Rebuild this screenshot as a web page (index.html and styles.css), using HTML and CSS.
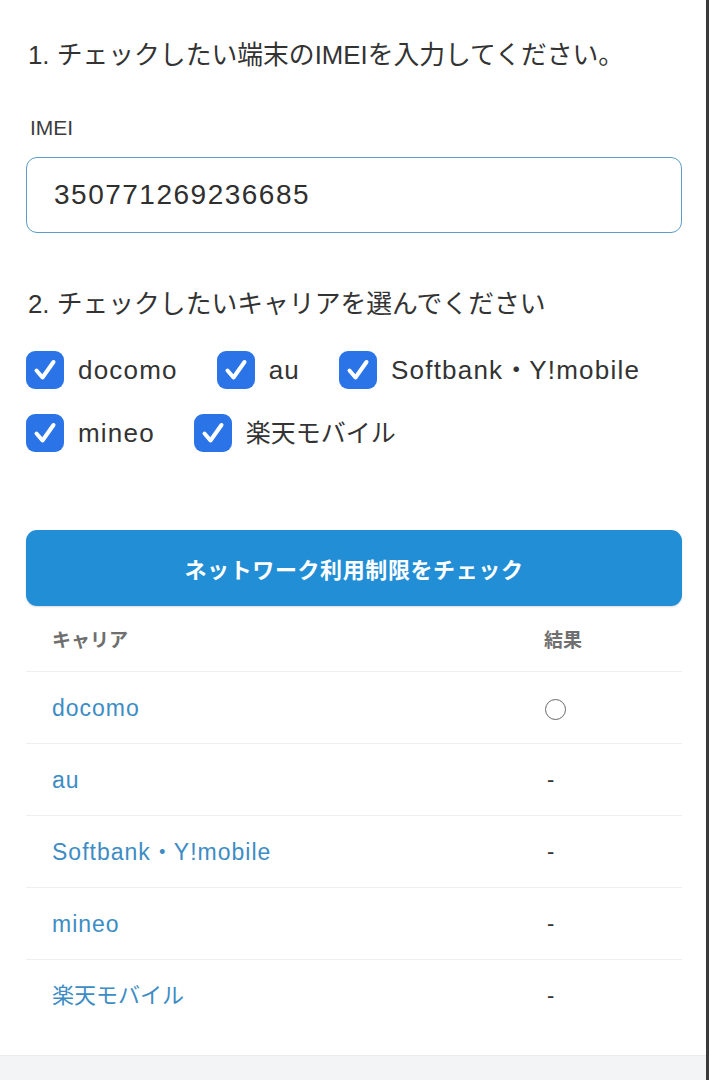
FILE: index.html
```html
<!DOCTYPE html>
<html lang="ja">
<head>
<meta charset="utf-8">
<link rel="stylesheet" href="styles.css">
</head>
<body>
<div class="page">
  <main class="content">
    <h2 class="step">1. チェックしたい端末のIMEIを入力してください。</h2>
    <label class="field-label">IMEI</label>
    <div class="input">350771269236685</div>

    <h2 class="step step-2">2. チェックしたいキャリアを選んでください</h2>
    <div class="checks">
      <div class="check-row">
        <span class="check"><span class="box"><svg viewBox="0 0 38 38"><path d="M10.5 19.5 L16.5 26.5 L27.5 11" /></svg></span><span class="lbl">docomo</span></span>
        <span class="check"><span class="box"><svg viewBox="0 0 38 38"><path d="M10.5 19.5 L16.5 26.5 L27.5 11" /></svg></span><span class="lbl">au</span></span>
        <span class="check"><span class="box"><svg viewBox="0 0 38 38"><path d="M10.5 19.5 L16.5 26.5 L27.5 11" /></svg></span><span class="lbl">Softbank<span class="dot">・</span>Y!mobile</span></span>
      </div>
      <div class="check-row">
        <span class="check"><span class="box"><svg viewBox="0 0 38 38"><path d="M10.5 19.5 L16.5 26.5 L27.5 11" /></svg></span><span class="lbl">mineo</span></span>
        <span class="check"><span class="box"><svg viewBox="0 0 38 38"><path d="M10.5 19.5 L16.5 26.5 L27.5 11" /></svg></span><span class="lbl jp">楽天モバイル</span></span>
      </div>
    </div>

    <button class="btn">ネットワーク利用制限をチェック</button>

    <table class="result">
      <thead>
        <tr><th class="c1">キャリア</th><th class="c2">結果</th></tr>
      </thead>
      <tbody>
        <tr><td class="c1">docomo</td><td class="c2"><span class="circle"></span></td></tr>
        <tr><td class="c1">au</td><td class="c2 dash">-</td></tr>
        <tr><td class="c1">Softbank<span class="dot">・</span>Y!mobile</td><td class="c2 dash">-</td></tr>
        <tr><td class="c1">mineo</td><td class="c2 dash">-</td></tr>
        <tr><td class="c1 jp">楽天モバイル</td><td class="c2 dash">-</td></tr>
      </tbody>
    </table>
  </main>
  <footer class="foot"></footer>
</div>
</body>
</html>
```

FILE: styles.css
```css
html, body {
  margin: 0;
  padding: 0;
  background: #ffffff;
}
body {
  font-family: "Liberation Sans", "Noto Sans CJK JP", sans-serif;
  color: #333;
}
.page {
  width: 706px;
  min-height: 1080px;
  border-right: 3px solid #3a3a3a;
  display: flex;
  flex-direction: column;
}
.content {
  padding: 37px 24px 24px 26px;
}
.step {
  margin: 0;
  font-weight: normal;
  font-size: 25.8px;
  line-height: 36px;
  color: #333;
  padding-left: 2px;
}
.field-label {
  display: block;
  margin-top: 41px;
  font-size: 21px;
  line-height: 28px;
  color: #3c3c3c;
  padding-left: 4px;
}
.input {
  margin-top: 15px;
  box-sizing: border-box;
  height: 76px;
  border: 1.5px solid #5c9cc8;
  border-radius: 11px;
  padding-left: 27px;
  display: flex;
  align-items: center;
  font-size: 28px;
  letter-spacing: 1.5px;
  color: #2f2f2f;
}
.step-2 {
  margin-top: 53px;
}
.checks {
  margin-top: 29px;
  display: flex;
  flex-direction: column;
  gap: 25px;
}
.check-row {
  display: flex;
  align-items: center;
  height: 38px;
}
.check {
  display: inline-flex;
  align-items: center;
  flex-shrink: 0;
  white-space: nowrap;
  margin-right: 39px;
  height: 38px;
}
.check:last-child {
  margin-right: 0;
}
.box {
  width: 38px;
  height: 38px;
  border-radius: 9px;
  background: #2b74e8;
  display: inline-flex;
  align-items: center;
  justify-content: center;
  flex-shrink: 0;
}
.box svg {
  width: 38px;
  height: 38px;
}
.box path {
  fill: none;
  stroke: #fff;
  stroke-width: 4;
  stroke-linecap: round;
  stroke-linejoin: round;
}
.lbl {
  margin-left: 14px;
  font-size: 26px;
  line-height: 30px;
  height: 30px;
  letter-spacing: 1.2px;
  color: #333;
  display: inline-block;
  white-space: nowrap;
}
.lbl.jp {
  font-size: 25px;
  letter-spacing: 0;
}
.dot {
  letter-spacing: 0;
}
.btn {
  display: block;
  width: 100%;
  margin-top: 78px;
  height: 76px;
  border: none;
  border-radius: 11px;
  background: #228ed6;
  color: #fff;
  font-family: "Liberation Sans", "Noto Sans CJK JP", sans-serif;
  font-weight: bold;
  font-size: 22px;
  letter-spacing: 0.6px;
  box-shadow: 0 1px 2px rgba(0,0,0,0.15);
}
.result {
  width: 100%;
  border-collapse: collapse;
}
.result th {
  height: 65px;
  text-align: left;
  font-weight: bold;
  font-size: 19px;
  color: #6f6f6f;
  border-bottom: 1.5px solid #eeeeee;
  padding: 0;
}
.result td {
  height: 71px;
  padding: 0;
  border-bottom: 1.5px solid #eeeeee;
  font-size: 23px;
  line-height: 28px;
  letter-spacing: 1px;
  color: #3d8cc4;
  white-space: nowrap;
}
.result tbody tr:last-child td {
  border-bottom: none;
}
.result td.jp {
  font-size: 22px;
  letter-spacing: 0;
}
.c1 {
  padding-left: 26px !important;
  width: 492px;
}
.result td.c2 {
  color: #333;
}
.result td.dash {
  font-size: 22px;
  padding-left: 3px;
}
.circle {
  display: inline-block;
  width: 19px;
  height: 19px;
  border: 1.3px solid #666;
  border-radius: 50%;
  margin-left: 1px;
  vertical-align: middle;
}
.foot {
  flex: 1;
  background: #f3f4f6;
  border-top: 1px solid #ececec;
}
```
